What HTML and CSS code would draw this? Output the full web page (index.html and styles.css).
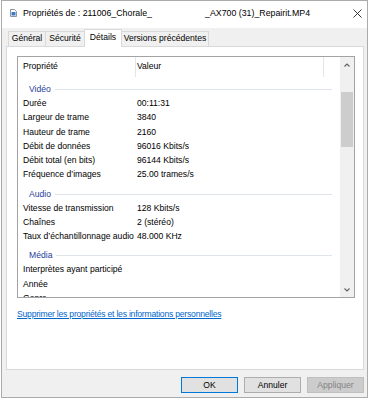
FILE: index.html
```html
<!DOCTYPE html>
<html lang="fr">
<head>
<meta charset="utf-8">
<title>Propriétés</title>
<link rel="stylesheet" href="styles.css">
</head>
<body>
<div class="window">
  <div class="titlebar">
    <svg class="ticon" width="7" height="8" viewBox="0 0 7 8">
      <path d="M0.5 0.5 H4.5 L6.5 2.5 V7.5 H0.5 Z" fill="#fff" stroke="#8a96a3"/>
      <rect x="1.5" y="3" width="4" height="3.5" fill="#3b78c8"/>
    </svg>
    <span class="title title1">Propriétés de : 211006_Chorale_</span>
    <span class="title">_AX700 (31)_Repairit.MP4</span>
    <span class="close">
      <svg width="9" height="9" viewBox="0 0 9 9"><path d="M0.5 0.5 L8.5 8.5 M8.5 0.5 L0.5 8.5" stroke="#222" stroke-width="0.9" fill="none"/></svg>
    </span>
  </div>
  <div class="body">
    <div class="tabs">
      <div class="tab t1">Général</div>
      <div class="tab t2">Sécurité</div>
      <div class="tab active">Détails</div>
      <div class="tab t4">Versions précédentes</div>
    </div>
    <div class="panel">
      <div class="list">
        <div class="listmain">
          <div class="lhead">
            <div class="hc hc1">Propriété</div>
            <div class="hc hc2">Valeur</div>
          </div>
          <div class="group"><span>Vidéo</span></div>
          <div class="row"><span class="k">Durée</span><span class="v">00:11:31</span></div>
          <div class="row"><span class="k">Largeur de trame</span><span class="v">3840</span></div>
          <div class="row"><span class="k">Hauteur de trame</span><span class="v">2160</span></div>
          <div class="row"><span class="k">Débit de données</span><span class="v">96016 Kbits/s</span></div>
          <div class="row"><span class="k">Débit total (en bits)</span><span class="v">96144 Kbits/s</span></div>
          <div class="row"><span class="k">Fréquence d’images</span><span class="v">25.00 trames/s</span></div>
          <div class="group"><span>Audio</span></div>
          <div class="row"><span class="k">Vitesse de transmission</span><span class="v">128 Kbits/s</span></div>
          <div class="row"><span class="k">Chaînes</span><span class="v">2 (stéréo)</span></div>
          <div class="row"><span class="k">Taux d’échantillonnage audio</span><span class="v">48.000 KHz</span></div>
          <div class="group"><span>Média</span></div>
          <div class="row"><span class="k">Interprètes ayant participé</span><span class="v"></span></div>
          <div class="row"><span class="k">Année</span><span class="v"></span></div>
          <div class="row"><span class="k">Genre</span><span class="v"></span></div>
        </div>
        <div class="scroll">
          <div class="sbtn">
            <svg width="6" height="4" viewBox="0 0 6 4"><path d="M0.5 3.5 L3 1 L5.5 3.5" stroke="#606060" stroke-width="1.1" fill="none"/></svg>
          </div>
          <div class="track"><div class="thumb"></div></div>
          <div class="sbtn">
            <svg width="6" height="4" viewBox="0 0 6 4"><path d="M0.5 0.5 L3 3 L5.5 0.5" stroke="#606060" stroke-width="1.1" fill="none"/></svg>
          </div>
        </div>
      </div>
      <a class="link" href="#">Supprimer les propriétés et les informations personnelles</a>
    </div>
    <div class="buttons">
      <div class="btn default">OK</div>
      <div class="btn">Annuler</div>
      <div class="btn disabled">Appliquer</div>
    </div>
  </div>
</div>
</body>
</html>
```

FILE: styles.css
```css
* { box-sizing: border-box; }
html, body { margin: 0; padding: 0; background: #ffffff; }
body {
  font-family: "Liberation Sans", Arial, sans-serif;
  font-size: 8.6px;
  color: #000;
}
.window {
  margin-left: 1px;
  width: 367px;
  height: 398px;
  border: 1px solid #ababab;
  display: flex;
  flex-direction: column;
}
.titlebar {
  height: 27px;
  background: #ffffff;
  display: flex;
  align-items: center;
  padding: 0 5px 3px 8px;
  flex: none;
}
.ticon { flex: none; margin-right: 6px; }
.title { font-size: 8.8px; line-height: 12px; white-space: nowrap; }
.title1 { width: 182px; flex: none; }
.close { margin-left: auto; display: flex; }
.body {
  flex: 1;
  background: #f0f0f0;
  display: flex;
  flex-direction: column;
}
.tabs {
  height: 18px;
  display: flex;
  align-items: flex-end;
  padding-left: 6px;
  flex: none;
}
.tab {
  height: 15px;
  line-height: 13px;
  text-align: center;
  border: 1px solid #d9d9d9;
  border-bottom: none;
  background: #f0f0f0;
  margin-right: -1px;
  white-space: nowrap;
}
.t1 { width: 38px; }
.t2 { width: 40px; }
.t4 { width: 88px; }
.tab.active {
  width: 38px;
  height: 18px;
  line-height: 15px;
  background: #ffffff;
  margin-bottom: -1px;
  position: relative;
  z-index: 2;
}
.panel {
  height: 324px;
  margin: 0 3px 0 4px;
  border: 1px solid #d9d9d9;
  background: #ffffff;
  padding: 9px 8px 0 10px;
  flex: none;
}
.list {
  height: 242px;
  border: 1px solid #a3a3a3;
  display: flex;
  overflow: hidden;
}
.listmain {
  flex: 1;
  overflow: hidden;
}
.lhead {
  height: 20px;
  display: flex;
}
.hc {
  height: 20px;
  padding-top: 3px;
  line-height: 12px;
  border-right: 1px solid #e5e5e5;
}
.hc1 { width: 118px; padding-left: 5px; }
.hc2 { width: 188px; padding-left: 1px; }
.group {
  height: 19px;
  padding: 5px 8px 0 11px;
  display: flex;
  align-items: center;
  line-height: 12px;
  color: #1f409a;
}
.group span { height: 12px; }
.group::after {
  content: "";
  flex: 1;
  height: 1px;
  background: #dfe4eb;
  margin-left: 4px;
  margin-top: 1px;
}
.row {
  height: 14.25px;
  display: flex;
  align-items: center;
  white-space: nowrap;
  line-height: 12px;
}
.k { width: 119px; padding-left: 5px; flex: none; }
.v { flex: 1; }
.scroll {
  width: 14px;
  background: #f0f0f0;
  display: flex;
  flex-direction: column;
  flex: none;
}
.sbtn {
  height: 15px;
  display: flex;
  align-items: center;
  justify-content: center;
  flex: none;
}
.track { flex: 1; padding: 20px 1px 0 1px; }
.thumb { height: 55px; background: #cdcdcd; }
.link {
  display: block;
  margin-top: 10px;
  line-height: 12px;
  color: #0066cc;
  text-decoration: underline;
  white-space: nowrap;
  letter-spacing: -0.22px;
}
.buttons {
  display: flex;
  justify-content: flex-end;
  gap: 6px;
  padding: 7px 3px 0 0;
}
.btn {
  width: 57px;
  height: 16px;
  border: 1px solid #adadad;
  background: #e1e1e1;
  line-height: 14px;
  text-align: center;
}
.btn.default { border-color: #0078d7; }
.btn.disabled { background: #cccccc; border-color: #bfbfbf; color: #838383; }
```
